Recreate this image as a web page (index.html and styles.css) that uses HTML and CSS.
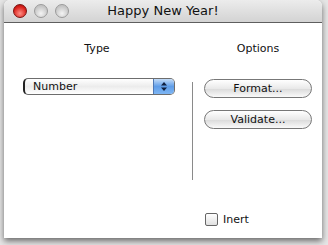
FILE: index.html
```html
<!DOCTYPE html>
<html>
<head>
<meta charset="utf-8">
<link rel="stylesheet" href="styles.css">
</head>
<body>
<div class="window">
  <div class="titlebar">
    <div class="lights">
      <span class="light red"></span>
      <span class="light"></span>
      <span class="light"></span>
    </div>
    <div class="title">Happy New Year!</div>
  </div>
  <div class="content">
    <div class="col-type">
      <div class="heading">Type</div>
      <div class="popup">
        <span class="popup-label">Number</span>
        <span class="stepper">
          <svg width="8" height="11" viewBox="0 0 8 11"><path d="M4 1 L7 4.5 L1 4.5 Z M4 10 L7 6.5 L1 6.5 Z" fill="#102040"/></svg>
        </span>
      </div>
    </div>
    <div class="divider"></div>
    <div class="col-options">
      <div class="heading">Options</div>
      <div class="btn">Format...</div>
      <div class="btn">Validate...</div>
      <div class="spacer"></div>
      <label class="check"><span class="box"></span>Inert</label>
    </div>
  </div>
</div>
</body>
</html>
```
FILE: styles.css
```css
html, body {
  margin: 0;
  padding: 0;
  background: #e6e6e6;
  width: 328px;
  height: 245px;
  overflow: hidden;
  font-family: "DejaVu Sans", "Liberation Sans", sans-serif;
}
.window {
  margin-left: 4px;
  width: 318px;
  height: 238px;
  background: #fff;
  border-radius: 6px 6px 0 0;
  box-shadow: 0 3px 6px rgba(0,0,0,0.55);
  display: flex;
  flex-direction: column;
  overflow: hidden;
}
.titlebar {
  height: 22px;
  background: linear-gradient(#ececec, #d3d3d3);
  border-bottom: 1px solid #5e5e5e;
  position: relative;
  display: flex;
  align-items: center;
}
.lights {
  display: flex;
  gap: 7px;
  padding-left: 9px;
}
.light {
  width: 14px;
  height: 14px;
  border-radius: 50%;
  background: radial-gradient(circle at 50% 70%, #f4f4f4, #c4c4c4 70%);
  border: 1px solid #9a9a9a;
  box-sizing: border-box;
}
.light.red {
  background: radial-gradient(circle at 50% 70%, #ff8f86, #d8201a 65%, #a01010);
  border-color: #7a1210;
}
.title {
  position: absolute;
  left: 0;
  right: 0;
  top: 3px;
  text-align: center;
  font-size: 13px;
  color: #111;
}
.content {
  flex: 1;
  display: flex;
  padding: 19px 10px 12px 19px;
}
.heading {
  font-size: 11px;
  color: #111;
  text-align: center;
  height: 14px;
}
.col-type {
  width: 152px;
}
.col-type .heading {
  padding-right: 4px;
}
.popup {
  margin-top: 22px;
  height: 15px;
  border: 1px solid #6d6d6d;
  border-left: 2px solid #222;
  border-radius: 5px;
  display: flex;
  background: linear-gradient(#fff, #ececec 50%, #fff);
  overflow: hidden;
}
.popup-label {
  flex: 1;
  font-size: 11px;
  line-height: 15px;
  padding-left: 8px;
  color: #111;
}
.stepper {
  width: 20px;
  background: linear-gradient(#c4dcf8, #5f9de8 50%, #7eb6f4);
  border-left: 1px solid #4f78b4;
  display: flex;
  align-items: center;
  justify-content: center;
}
.divider {
  width: 1px;
  background: #8a8a8a;
  margin: 40px 11px 46px 17px;
}
.col-options {
  flex: 1;
  display: flex;
  flex-direction: column;
}
.btn {
  height: 17px;
  border: 1px solid #777;
  border-radius: 10px;
  background: linear-gradient(#ffffff, #e9e9e9 50%, #dcdcdc 55%, #fafafa);
  font-size: 11px;
  line-height: 17px;
  text-align: center;
  color: #111;
  margin-top: 23px;
}
.btn + .btn {
  margin-top: 12px;
}
.spacer {
  flex: 1;
}
.check {
  display: flex;
  align-items: center;
  gap: 5px;
  font-size: 11px;
  color: #111;
  padding-left: 1px;
}
.box {
  width: 13px;
  height: 13px;
  border: 1px solid #666;
  border-radius: 2px;
  background: linear-gradient(#fff, #e0e0e0);
  box-sizing: border-box;
}
```
